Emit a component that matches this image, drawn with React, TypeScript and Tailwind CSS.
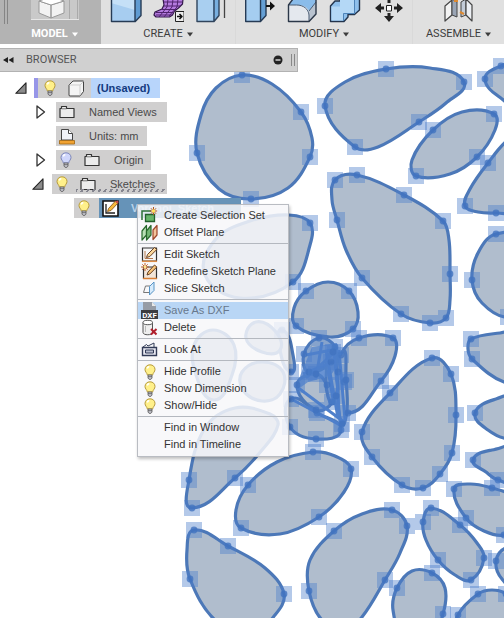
import { ReactNode } from 'react';

type Point = { x: number; y: number; handle: boolean };

// Trailing 1 marks a fit point that shows its handle
const PROFILES: number[][][] = [
  [[242, 75, 1], [272, 84], [301, 112, 1], [312, 138], [310, 157, 1], [288, 188], [251, 199, 1], [219, 189], [197, 153, 1], [201, 115], [216, 88]],
  [[386, 69, 1], [430, 68], [464, 82, 1], [446, 103], [419, 122, 1], [378, 147], [355, 147, 1], [325, 106, 1], [345, 82]],
  [[494, 114, 1], [495, 130], [477, 157, 1], [450, 174], [416, 176, 1], [412, 160], [433, 130, 1], [462, 112]],
  [[485, 79, 1], [501, 66, 1], [525, 62], [525, 110], [502, 99]],
  [[488, 163, 1], [508, 140], [530, 130], [530, 210], [496, 213, 1], [478, 212], [465, 206, 1], [470, 189]],
  [[335, 180, 1], [357, 175, 1], [404, 195, 1], [443, 221, 1], [449, 240], [450, 274, 1], [450, 300], [446, 318, 1], [430, 323, 1], [401, 314, 1], [362, 278, 1], [346, 250], [337, 220, 1], [332, 200]],
  [[496, 234, 1], [478, 253], [472, 280, 1], [482, 303], [508, 317, 1], [530, 300], [530, 240]],
  [[471, 339, 1], [468, 349], [472, 359, 1], [504, 382], [530, 380], [530, 331], [500, 333]],
  [[475, 413, 1], [488, 430], [510, 439], [530, 430], [530, 395], [496, 399]],
  [[473, 460, 1], [486, 472], [498, 480, 1], [530, 485], [530, 448], [492, 450]],
  [[454, 489, 1], [466, 518, 1], [484, 531], [504, 535, 1], [530, 520], [510, 495], [492, 488, 1], [470, 484]],
  [[431, 508, 1], [460, 525, 1], [477, 543], [484, 558, 1], [471, 580, 1], [455, 575], [438, 560, 1], [426, 540], [423, 522, 1]],
  [[496, 561, 1], [506, 548], [530, 550], [520, 590], [502, 579]],
  [[432, 573, 1], [445, 588], [443, 614, 1], [430, 640], [405, 640], [393, 610], [397, 588, 1], [412, 571]],
  [[458, 615, 1], [478, 594, 1], [492, 590], [506, 594, 1], [530, 620], [500, 660], [455, 640]],
  [[392, 510, 1], [407, 526, 1], [400, 553], [385, 580, 1], [362, 617], [345, 630], [322, 620], [309, 591, 1], [310, 560], [334, 531, 1], [362, 514]],
  [[194, 530, 1], [228, 546, 1], [265, 568], [284, 594, 1], [275, 615], [250, 635], [215, 620], [190, 579, 1], [187, 550]],
  [[313, 452, 1], [335, 456], [351, 469, 1], [344, 492], [319, 517, 1], [280, 534], [241, 528, 1], [236, 510], [248, 485, 1], [277, 462]],
  [[189, 480, 1], [192, 508, 1], [235, 478, 1], [262, 450], [278, 425], [270, 414], [235, 408], [205, 428]],
  [[310, 223, 1], [310, 245], [293, 282, 1], [240, 298], [205, 275], [215, 240], [250, 221], [289, 215]],
  [[306, 291, 1], [328, 282], [349, 291, 1], [358, 312], [353, 329, 1], [330, 337], [296, 326, 1], [294, 308]],
  [[359, 338, 1], [393, 338, 1], [395, 356], [381, 381, 1], [348, 413, 1], [344, 382, 1], [341, 355, 1]],
  [[432, 358, 1], [451, 374, 1], [456, 415, 1], [452, 453, 1], [440, 474, 1], [423, 488, 1], [402, 485, 1], [372, 457, 1], [362, 432, 1], [390, 393, 1]],
  [[291, 399, 1], [317, 413, 1], [341, 430, 1], [316, 439, 1], [290, 427, 1]],
  [[282, 330, 1], [293, 355], [291, 372, 1], [280, 350]],
  [[213, 330], [234, 345], [232, 375], [214, 400], [196, 375], [194, 345]],
  [[256, 322], [276, 332], [280, 350], [262, 352], [246, 338]],
  [[262, 362], [283, 372], [280, 394], [262, 401], [243, 390], [242, 372]],
  // tightly packed knot in the middle
  [[304, 354, 1], [319, 338, 1], [335, 347, 1], [331, 362, 1], [309, 372, 1]],
  [[297, 385, 1], [316, 374, 1], [327, 385, 1], [332, 402, 1], [316, 410, 1]],
  [[333, 352, 1], [338, 372, 1], [336, 396, 1], [330, 402], [326, 374]],
  [[342, 352], [346, 380, 1], [347, 410], [342, 424, 1], [338, 390]],
];

const KNOT_LINES = 'M293 400L342 426M297 387L344 422M326 350L338 418M334 350L340 422M339 350L345 420M306 355L332 350M303 374L333 362M322 342L316 378M306 378L335 352M328 370L334 405';
const KNOT_CORE = 'M312 347L337 343L341 362L330 376L308 382L297 390L300 376Z';

function smoothPath(points: Point[]) {
  const n = points.length;
  const tangents = points.map((_, i) => {
    const a = points[(i + n - 1) % n];
    const b = points[(i + 1) % n];
    const length = Math.hypot(b.x - a.x, b.y - a.y) || 1;
    return { x: (b.x - a.x) / length, y: (b.y - a.y) / length };
  });
  const segments = points.map((p, i) => {
    const j = (i + 1) % n;
    const q = points[j];
    const k = Math.hypot(q.x - p.x, q.y - p.y) * 0.35;
    return `C${p.x + tangents[i].x * k} ${p.y + tangents[i].y * k} ${q.x - tangents[j].x * k} ${q.y - tangents[j].y * k} ${q.x} ${q.y}`;
  });
  return `M${points[0].x} ${points[0].y}${segments.join('')}Z`;
}

function SketchCanvas() {
  const profiles: Point[][] = PROFILES.map((profile) => profile.map(([x, y, handle]) => ({ x, y, handle: handle === 1 })));
  const handles = profiles.flat().filter((p) => p.handle);
  return (
    <svg className="absolute inset-0 h-full w-full" aria-hidden="true">
      {profiles.map((points, i) => (
        <path key={i} d={smoothPath(points)} fill="#b0bdcd" stroke="#4c78b8" strokeWidth="3.2" strokeLinejoin="round" />
      ))}
      <path d={KNOT_CORE} fill="#5384cc" fillOpacity="0.75" />
      <path d={KNOT_LINES} fill="none" stroke="#4f80cb" strokeWidth="3" />
      {handles.map((p, i) => (
        <g key={i}>
          <rect x={p.x - 8} y={p.y - 8} width="16" height="16" fill="#4c7fcb" fillOpacity="0.42" />
          <circle cx={p.x} cy={p.y} r="3.4" fill="#4173bf" fillOpacity="0.8" />
        </g>
      ))}
    </svg>
  );
}

function BulbIcon({ off = false }: { off?: boolean }) {
  return (
    <svg width="12" height="16" viewBox="0 0 12 16" className="shrink-0">
      <path d="M6 .8C3 .8 1 2.9 1 5.5c0 2.3 2 3.3 2.4 5.5h5.2C9 8.8 11 7.8 11 5.5 11 2.9 9 .8 6 .8z" fill={off ? '#cfd6fb' : '#fff08a'} stroke={off ? '#7d86b8' : '#b69a3c'} />
      <path d="M3.3 4.500c.3-1.100 1-1.700 2-1.900" fill="none" stroke="#fff" strokeWidth="1.5" />
      <path d="M4 11h4v3l-1 1.300H5L4 14z" fill="#c9c9d2" stroke="#555" strokeWidth=".8" />
      <path d="M4 12.700h4" stroke="#555" strokeWidth=".8" />
    </svg>
  );
}

function FolderIcon() {
  return (
    <svg width="16" height="14" viewBox="0 0 16 14" className="shrink-0">
      <path d="M1 12.500V3.500h1.500V1.500h5v2H15v9z" fill="#ececec" stroke="#333" strokeWidth="1.2" strokeLinejoin="round" />
      <path d="M2.500 3.800h5" stroke="#777" />
    </svg>
  );
}

function ComponentIcon() {
  return (
    <svg width="17" height="17" viewBox="0 0 17 17" className="shrink-0">
      <path d="M1 5L5 1h10.500v10.500L12 16H1.500L1 15z" fill="#f4f4f4" stroke="#444" strokeLinejoin="round" />
      <path d="M1.500 5H12v10.500M12 5l3.500-3.500" fill="none" stroke="#cfcfcf" />
    </svg>
  );
}

function UnitsIcon() {
  return (
    <svg width="16" height="17" viewBox="0 0 16 17" className="shrink-0">
      <path d="M2.500 12V1.500h7l4 4V12z" fill="#f0f2f8" stroke="#444" />
      <path d="M9.500 1.500v4h4" fill="#fff" stroke="#444" />
      <path d="M.5 12.500h15v3.500H.5z" fill="#f0a232" stroke="#a0640f" strokeWidth=".8" />
    </svg>
  );
}

function SketchIcon() {
  return (
    <svg width="17" height="17" viewBox="0 0 17 17" className="shrink-0">
      <path d="M1 1h15v15H1z" fill="#fff" stroke="#111" strokeWidth="1.6" />
      <path d="M4 4v9h9" fill="none" stroke="#222" strokeWidth="1.3" />
      <path d="M5.500 11.500l1-3L13.500 1l2.500 2-7 7.500z" fill="#f5b93c" stroke="#7a4a10" strokeWidth=".8" />
      <path d="M13 1.500l3-1 .5 2-1 1.200z" fill="#c54a44" />
    </svg>
  );
}

function Expander({ open, label }: { open: boolean; label: string }) {
  return (
    <button type="button" aria-label={label} aria-expanded={open} className="flex w-3 shrink-0 justify-center">
      {open ? (
        <svg width="12" height="12" viewBox="0 0 12 12">
          <path d="M.8 11.300H11V.8z" fill="#8c8c8c" stroke="#222" strokeWidth="1.1" strokeLinejoin="round" />
        </svg>
      ) : (
        <svg width="10" height="14" viewBox="0 0 10 14">
          <path d="M1 1v12l7.500-6z" fill="#fff" stroke="#333" strokeWidth="1.3" strokeLinejoin="round" />
        </svg>
      )}
    </button>
  );
}

function BrowserPanel() {
  return (
    <section className="relative text-[11px] text-[#4a4a4a]">
      <header className="flex h-6 w-[298px] items-center border border-l-0 border-[#b2b2b2] bg-[#d0d0d0] pl-[3px] pr-[2px] font-['Roboto',sans-serif]">
        <button type="button" aria-label="Collapse browser">
          <svg width="11" height="8" viewBox="0 0 11 8">
            <path d="M5 1v6L0 4zM10.500 1v6l-5-3z" fill="#222" />
          </svg>
        </button>
        <h2 className="ml-3 flex-1 text-[#555]">BROWSER</h2>
        <button type="button" aria-label="Minimize">
          <svg width="10" height="10" viewBox="0 0 10 10">
            <circle cx="5" cy="5" r="4.5" fill="#222" />
            <path d="M2.500 5h5" stroke="#ddd" strokeWidth="1.4" />
          </svg>
        </button>
        <span className="ml-2 h-3 w-1 border-x border-[#888]" />
      </header>

      <ul className="flex flex-col gap-1 pt-1.5">
        <li className="flex h-5 items-center pl-[15px]">
          <Expander open label="(Unsaved)" />
          <span className="ml-[7px] flex h-5 items-center border-l-4 border-[#9796e8] bg-[#d0cfcf]">
            <span className="flex items-center gap-3 pl-1.5 pr-1.5"><BulbIcon /><ComponentIcon /></span>
            <span className="flex h-5 items-center bg-[#b8d5fb] pl-1.5 pr-2.5 font-bold text-[#123a80]">(Unsaved)</span>
          </span>
        </li>
        <li className="flex h-5 items-center pl-[35px]">
          <Expander open={false} label="Named Views" />
          <span className="ml-[9px] flex h-5 items-center gap-3.5 bg-[#d0cfcf] pl-[3px] pr-2.5"><FolderIcon />Named Views</span>
        </li>
        <li className="flex h-5 items-center pl-14">
          <span className="flex h-5 items-center gap-3.5 bg-[#d0cfcf] pl-[3px] pr-2"><UnitsIcon />Units: mm</span>
        </li>
        <li className="flex h-5 items-center pl-[35px]">
          <Expander open={false} label="Origin" />
          <span className="ml-[9px] flex h-5 items-center bg-[#d0cfcf] pl-1 pr-2">
            <BulbIcon off />
            <span className="ml-3 flex items-center gap-3.5"><FolderIcon />Origin</span>
          </span>
        </li>
        <li className="flex h-5 items-center pl-8">
          <Expander open label="Sketches" />
          <span className="relative ml-2 flex h-5 items-center bg-[#d0cfcf] pl-1 pr-3">
            <BulbIcon />
            <span className="ml-3 flex items-center gap-3.5"><FolderIcon />Sketches</span>
            <span className="absolute bottom-0.5 left-6 right-0.5 h-[3px] bg-[repeating-linear-gradient(120deg,#85858f_0_2px,transparent_2px_5px)]" />
          </span>
        </li>
        <li className="flex h-5 items-center pl-[74px]">
          <span className="flex h-5 w-[25px] items-center bg-[#d0cfcf] pl-1"><BulbIcon /></span>
          <span className="flex h-5 w-[142px] items-center gap-3 bg-[#6693b8] pl-[3px] font-bold text-[#b9d2ea]"><SketchIcon />Voronoi_Sketch</span>
        </li>
      </ul>
    </section>
  );
}

function ToolGroup({ label, className, children }: { label: string; className: string; children: ReactNode }) {
  return (
    <div className={className}>
      <div className="flex h-6 justify-center gap-2.5">{children}</div>
      <button type="button" className="flex h-5 w-full items-center justify-center gap-1">
        {label}
        <svg width="6" height="5" viewBox="0 0 6 5"><path d="M0 .5h6L3 4.500z" fill="currentColor" /></svg>
      </button>
    </div>
  );
}

function Tool({ label, children }: { label: string; children: ReactNode }) {
  return (
    <button type="button" aria-label={label}>
      <svg width="32" height="24" viewBox="0 0 32 24" strokeLinejoin="round">{children}</svg>
    </button>
  );
}

function Toolbar() {
  return (
    <nav className="relative flex h-11 overflow-hidden bg-[#e0e0e0] font-['Roboto',sans-serif] text-[11px] text-[#3c3c3c]">
      <ToolGroup label="MODEL" className="relative w-[101px] shrink-0 bg-[#b3b3b3] pl-2 font-bold text-white">
        <span className="absolute left-1 top-0 h-6 w-1 border-x border-[#858585]" />
        <svg width="48" height="20" viewBox="0 0 48 20">
          <path d="M0 0h48v19H0z" fill="#c9c9c9" />
          <path d="M0 19.500h48" stroke="#e6e6e6" />
          <path d="M38.500 0v19M46.500 0v19" stroke="#aaa" />
          <path d="M8 1l12 4v13L8 13zM20 5l13-4v12l-13 5z" fill="#f2f2f2" stroke="#999" />
          <path d="M8 1l9-3h8l8 3-13 4z" fill="#fff" stroke="#999" />
        </svg>
      </ToolGroup>
      <ToolGroup label="CREATE" className="w-[135px] shrink-0 border-r border-[#d9d9d9]">
        <Tool label="Box">
          <path d="M1 0h24v21.500H1z" fill="#a7cdf0" />
          <path d="M1 0h24v10L1 3z" fill="#c5e0f7" />
          <path d="M25 0h6v15l-6 6.500z" fill="#5f9bd2" />
          <path d="M1.500-2v23.500h23.800l5.700-6V-2M25 0v21" fill="none" stroke="#263b55" strokeWidth="1.4" />
        </Tool>
        <Tool label="Create Form">
          <path d="M11-1h20l-.5 5-4 4-4 3-2 4-3 2H4l-2-2 1-3 7-3 2-4z" fill="#b57be0" stroke="#32174a" strokeWidth="1.2" />
          <path d="M12 2h18M12 6h16M9 9.500h15M4 12.500h18M4 15h16M16-1l-1 8-8 10M21-1l-1 8-8 10M26-1l-1 8-8 9" fill="none" stroke="#50246e" />
          <path d="M23.500 11.500H32v10h-8.500z" fill="#eee" stroke="#222" />
          <path d="M25 16.500h5M27.500 14l2.500 2.500-2.500 2.500" fill="none" stroke="#111" strokeWidth="1.5" />
        </Tool>
        <Tool label="Extrude">
          <path d="M3-1h16v22.500H3z" fill="#a9cff0" />
          <path d="M19-1h6v17l-6 5.500z" fill="#78afdf" />
          <path d="M3-2v23.500h17l5-6V-2M20 0v21" fill="none" stroke="#30445c" strokeWidth="1.4" />
          <path d="M30.500 0v18" stroke="#444" strokeWidth="1.3" />
        </Tool>
      </ToolGroup>
      <ToolGroup label="MODIFY" className="w-[177px] shrink-0 border-r border-[#d9d9d9]">
        <Tool label="Press Pull">
          <path d="M0-1h15v22.500H0z" fill="#a5cdf0" />
          <path d="M15-1h6v17l-6 5.500z" fill="#659fd4" />
          <path d="M.7-2v23.500H15.500l5.500-6V-2M15.500 0v21" fill="none" stroke="#263b55" strokeWidth="1.4" />
          <path d="M21 6h5" stroke="#111" strokeWidth="2" />
          <path d="M25 1.500l5 4.500-5 4.500z" fill="#111" />
        </Tool>
        <Tool label="Fillet">
          <path d="M1.500 5L6-1h23v15l-7 7.500H1.500z" fill="#e4e8ee" />
          <path d="M1.500 5L6-1h23c1 5-4 8-7 12-2-4-6-6-12-6z" fill="#8abcea" />
          <path d="M22 11l7-9v12l-7 7.500z" fill="#b9c3cf" />
          <path d="M1.500 5h8c7 0 12 4 12.500 10v6.500M22 11l7-9" fill="none" stroke="#4a5d75" />
          <path d="M6-1L1.500 5v16.500H22l7-7.500V-1" fill="none" stroke="#2b3748" strokeWidth="1.4" />
        </Tool>
        <Tool label="Combine">
          <path d="M1.500 6L6 1h5v-3h19.500v12l-5 4.500H19v2.500l-4 4.500H1.500z" fill="#8fc0ec" stroke="#23344c" strokeWidth="1.4" />
          <path d="M2.500 6.500H11V-1h14v14.500H14.500v7h-12z" fill="#b4d8f6" />
          <path d="M14.500 21v-7.500H25.500M25.500 14V0" fill="none" stroke="#4d83b8" />
        </Tool>
        <Tool label="Move">
          <path d="M15.500 5.500h5v5.500h-5z" fill="#fff" stroke="#222" />
          <path d="M4 8l6-5v3.500h3v3h-3V13zM32 8l-6-5v3.500h-3v3h3V13zM18 22l-5-6h3.500v-3h3v3H23zM16.500 0h3v3h-3z" fill="#222" />
        </Tool>
      </ToolGroup>
      <ToolGroup label="ASSEMBLE" className="min-w-0 flex-1">
        <Tool label="Joint">
          <path d="M2 6l7-6v15l-7 6z" fill="#f3f3f3" stroke="#444" strokeWidth="1.2" />
          <path d="M9-1l5 3v15l-5-2z" fill="#9aa5b5" stroke="#444" />
          <path d="M18 2l5-3v16l-5 2z" fill="#c3ccd8" stroke="#444" />
          <path d="M23-1l6 6v16l-6-6z" fill="#edf0f4" stroke="#444" strokeWidth="1.2" />
          <path d="M11 1h4M17 12l4 2" stroke="#dd8a32" strokeWidth="2" />
        </Tool>
      </ToolGroup>
    </nav>
  );
}

const selectionSetIcon = (
  <svg width="17" height="17" viewBox="0 0 17 17">
    <path d="M1 13V4h9" fill="none" stroke="#2d7138" strokeWidth="1.5" />
    <path d="M4.500 7.500h9v7h-9z" fill="#68b56b" stroke="#23602d" strokeWidth="1.3" />
    <path d="M12.500 0v8M8.800 4h7.400M10 1.300l5 5.400M15 1.300l-5 5.400" stroke="#b0551f" />
    <circle cx="12.5" cy="4" r="1.7" fill="#ffe45c" />
  </svg>
);

const offsetPlaneIcon = (
  <svg width="17" height="17" viewBox="0 0 17 17" strokeLinejoin="round">
    <path d="M1 7l4.500-5.500v9.500L1 16z" fill="#b9dfb5" stroke="#28682c" strokeWidth="1.2" />
    <path d="M5.500 7L10 1.500V11l-4.500 5z" fill="#75b775" stroke="#28682c" strokeWidth="1.2" />
    <path d="M12 6l4-4.500V11l-4 4.500z" fill="#f3c39b" stroke="#9d4429" strokeWidth="1.2" />
  </svg>
);

const editSketchIcon = (
  <svg width="17" height="17" viewBox="0 0 17 17">
    <path d="M1.500 2h14v13h-14z" fill="#f7f7f7" stroke="#333" strokeWidth="1.2" />
    <path d="M1 15.300h15" stroke="#dc8b46" strokeWidth="1.5" />
    <path d="M4 5v7.500h8" fill="none" stroke="#b57a50" />
    <path d="M5.500 11.500l1-3 7-7 2.300 2-7 7z" fill="#fbd79b" stroke="#684126" />
  </svg>
);

const redefineIcon = (
  <svg width="17" height="17" viewBox="0 0 17 17">
    <path d="M2.500 4h13v11.500h-13z" fill="#f1e5d9" stroke="#333" strokeWidth="1.2" />
    <path d="M2 15.500h14" stroke="#d87f35" strokeWidth="1.5" />
    <path d="M6 12l1-3 6.500-7 2.300 2-7 7z" fill="#f7c478" stroke="#684126" />
    <path d="M4 0v8M0 4h8M1.300 1.300l5.400 5.400M6.700 1.300L1.300 6.700" stroke="#c2602c" />
    <circle cx="4" cy="4" r="1.4" fill="#ffe68a" />
  </svg>
);

const sliceIcon = (
  <svg width="17" height="17" viewBox="0 0 17 17" fill="none" strokeLinejoin="round">
    <path d="M2.500 12.500l2-6.500h8l-2 6.500z" stroke="#777" />
    <path d="M8.500 6.500L13 2v8.500L8.500 15z" fill="#d7ebfb" stroke="#5794c6" />
  </svg>
);

const dxfIcon = (
  <svg width="17" height="17" viewBox="0 0 17 17">
    <path d="M2 0h9l4 4v7H2z" fill="#969ca6" />
    <path d="M11 0v4h4z" fill="#e8e8e8" />
    <path d="M0 8h17v9H0z" fill="#3b3b40" />
    <text x="8.500" y="15.500" textAnchor="middle" fill="#fff" fontSize="8" fontWeight="bold" fontFamily="Roboto, sans-serif">DXF</text>
  </svg>
);

const deleteIcon = (
  <svg width="17" height="17" viewBox="0 0 17 17">
    <path d="M2 3.500v10c0 3 9.500 3 9.500 0v-10" fill="#eee" stroke="#555" />
    <ellipse cx="6.75" cy="3.5" rx="4.75" ry="2.2" fill="#fff" stroke="#555" />
    <path d="M4.500 7v6" stroke="#bbb" />
    <path d="M10 10l5.500 5.500M15.500 10L10 15.500" stroke="#b11f2c" strokeWidth="2" />
  </svg>
);

const lookAtIcon = (
  <svg width="17" height="17" viewBox="0 0 17 17">
    <path d="M1.500 6.500h14v8h-14z" fill="#e9e9f2" stroke="#333c58" strokeWidth="1.4" />
    <path d="M4.500 9h8v3h-8z" fill="#b9bed0" stroke="#333c58" />
    <path d="M2 6l3.500-2.500L7 5l6-3v4" fill="none" stroke="#333c58" />
  </svg>
);

type MenuEntry = { label: string; icon?: ReactNode; highlighted?: boolean };

const MENU_GROUPS: MenuEntry[][] = [
  [{ label: 'Create Selection Set', icon: selectionSetIcon }, { label: 'Offset Plane', icon: offsetPlaneIcon }],
  [{ label: 'Edit Sketch', icon: editSketchIcon }, { label: 'Redefine Sketch Plane', icon: redefineIcon }, { label: 'Slice Sketch', icon: sliceIcon }],
  [{ label: 'Save As DXF', icon: dxfIcon, highlighted: true }, { label: 'Delete', icon: deleteIcon }],
  [{ label: 'Look At', icon: lookAtIcon }],
  [{ label: 'Hide Profile', icon: <BulbIcon /> }, { label: 'Show Dimension', icon: <BulbIcon /> }, { label: 'Show/Hide', icon: <BulbIcon /> }],
  [{ label: 'Find in Window' }, { label: 'Find in Timeline' }],
];

function ContextMenu() {
  return (
    <div role="menu" className="absolute left-[137px] top-[204px] w-[152px] divide-y divide-[#b4b8bf] border border-[#b9bcc2] bg-[#f7f7f9]/85 pb-px text-[11px] text-[#333] shadow-[1px_2px_3px_rgba(0,0,0,0.25)]">
      {MENU_GROUPS.map((group, i) => (
        <div key={i} className="py-0.5">
          {group.map((entry) => (
            <button
              key={entry.label}
              type="button"
              role="menuitem"
              className={`flex h-[17px] w-full items-center text-left ${entry.highlighted ? 'bg-[#b9d6f5] text-[#68788c]' : ''}`}
            >
              <span className="ml-[3px] mr-1.5 flex w-[17px] justify-center">{entry.icon}</span>
              {entry.label}
            </button>
          ))}
        </div>
      ))}
    </div>
  );
}

export default function App() {
  return (
    <main className="relative min-h-screen overflow-hidden bg-white font-['Liberation_Sans',Arial,sans-serif]">
      <SketchCanvas />
      <Toolbar />
      <div className="relative h-1 bg-white" />
      <BrowserPanel />
      <ContextMenu />
    </main>
  );
}
